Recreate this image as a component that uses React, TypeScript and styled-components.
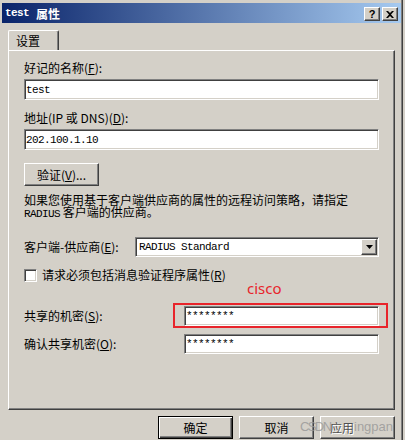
import React from "react";
import styled, { createGlobalStyle, css } from "styled-components";

const Global = createGlobalStyle`
  html, body { margin: 0; padding: 0; background: #d4d0c8; }
  body {
    font-family: "Noto Sans CJK SC", "Noto Sans", sans-serif;
    font-size: 12px;
    color: #000;
    overflow: hidden;
  }
  #root { width: 405px; height: 440px; }
`;

const raised = css`
  background: #d4d0c8;
  border: 1px solid;
  border-color: #fff #404040 #404040 #fff;
  box-shadow: inset -1px -1px #808080;
`;

const sunken = css`
  background: #fff;
  border: 1px solid;
  border-color: #808080 #fff #fff #808080;
  box-shadow: inset 1px 1px #404040, inset -1px -1px #d4d0c8;
`;

const Window = styled.div`
  box-sizing: border-box;
  width: 403px;
  height: 440px;
  padding: 3px 1px 0 2px;
  background: #d4d0c8;
  border-right: 1px solid #404040;
  box-shadow: inset -1px 0 #808080;
  display: flex;
  flex-direction: column;
`;

const TitleBar = styled.div`
  height: 20px;
  display: flex;
  align-items: center;
  justify-content: space-between;
  padding: 0 3px 0 3px;
  background: linear-gradient(to right, #0a246a, #a6caf0);
`;

const Title = styled.div`
  display: flex;
  align-items: center;
  gap: 7px;
  color: #fff;
  font-weight: bold;
  font-size: 12px;
`;

const Mono = styled.span`
  font-family: "Liberation Mono", "DejaVu Sans Mono", monospace;
  font-size: 11px;
  letter-spacing: -0.6px;
`;

const CaptionButtons = styled.div`
  display: flex;
  gap: 2px;
  align-self: flex-end;
  margin-bottom: 2px;
`;

const CaptionButton = styled.div`
  ${raised};
  box-sizing: border-box;
  width: 16px;
  height: 14px;
  display: flex;
  align-items: center;
  justify-content: center;
  font-family: "Liberation Sans", Arial, sans-serif;
  font-weight: bold;
  font-size: 11px;
  line-height: 1;
  color: #000;
`;

const Body = styled.div`
  padding: 7px 6px 0 6px;
  display: flex;
  flex-direction: column;
`;

const TabStrip = styled.div`
  display: flex;
  height: 20px;
`;

const Tab = styled.div`
  position: relative;
  z-index: 1;
  box-sizing: border-box;
  width: 51px;
  height: 20px;
  margin-bottom: -1px;
  padding-left: 7px;
  display: flex;
  align-items: center;
  background: #d4d0c8;
  border-left: 1px solid #fff;
  border-top: 1px solid #fff;
  border-right: 1px solid #404040;
  border-top-left-radius: 2px;
  border-top-right-radius: 2px;
  box-shadow: inset -1px 0 #808080;
`;

const Panel = styled.div`
  box-sizing: border-box;
  height: 360px;
  padding: 0 15px;
  border: 1px solid;
  border-color: #fff #404040 #404040 #fff;
  box-shadow: inset -1px -1px #808080;
  display: flex;
  flex-direction: column;
`;

const Field = styled.div<{ $mt: number }>`
  display: flex;
  flex-direction: column;
  gap: 4px;
  margin-top: ${(p) => p.$mt}px;
`;

const Label = styled.div`
  height: 14px;
  line-height: 14px;
  white-space: nowrap;
`;

const TextBox = styled.div<{ $h?: number; $w?: number }>`
  ${sunken};
  box-sizing: border-box;
  height: ${(p) => p.$h ?? 21}px;
  width: ${(p) => (p.$w ? `${p.$w}px` : "auto")};
  padding-left: 1px;
  display: flex;
  align-items: center;
  font-family: "Liberation Mono", "DejaVu Sans Mono", monospace;
  font-size: 11px;
  letter-spacing: -0.6px;
  white-space: nowrap;
`;

const PushButton = styled.div<{ $default?: boolean; $disabled?: boolean }>`
  box-sizing: border-box;
  width: 75px;
  height: 23px;
  display: flex;
  align-items: center;
  justify-content: center;
  white-space: nowrap;
  background: #d4d0c8;
  ${(p) =>
    p.$default
      ? css`
          border: 1px solid #000;
          box-shadow: inset 1px 1px #fff, inset -1px -1px #404040,
            inset -2px -2px #808080;
        `
      : raised};
  ${(p) =>
    p.$disabled &&
    css`
      justify-content: flex-start;
      padding-left: 9px;
      color: #505050;
      text-shadow: 1px 1px #fff;
    `};
`;

const VerifyRow = styled.div`
  margin-top: 13px;
  display: flex;
`;

const Paragraph = styled.div`
  margin-top: 8px;
  line-height: 12px;
  white-space: nowrap;
`;

const Row = styled.div<{ $mt: number }>`
  margin-top: ${(p) => p.$mt}px;
  display: flex;
  align-items: center;
  justify-content: space-between;
`;

const Combo = styled.div`
  ${sunken};
  box-sizing: border-box;
  width: 244px;
  height: 20px;
  display: flex;
  align-items: center;
  padding: 2px 1px 2px 3px;
  font-family: "Liberation Mono", "DejaVu Sans Mono", monospace;
  font-size: 11px;
  letter-spacing: -0.6px;
`;

const DropButton = styled.div`
  ${raised};
  box-sizing: border-box;
  margin-left: auto;
  width: 16px;
  height: 16px;
  display: flex;
  align-items: center;
  justify-content: center;
`;

const CheckRow = styled.div`
  margin-top: 11px;
  display: flex;
  align-items: center;
  gap: 5px;
`;

const CheckBox = styled.div`
  ${sunken};
  box-sizing: border-box;
  width: 13px;
  height: 13px;
`;

const InputWrap = styled.div`
  position: relative;
  width: 195px;
`;

const RedBox = styled.div`
  position: absolute;
  top: -3px;
  left: -11px;
  right: -9px;
  bottom: -2px;
  border: 2px solid #e8242b;
  pointer-events: none;
`;

const Note = styled.div`
  position: absolute;
  left: 63px;
  top: -28px;
  color: #e8242b;
  font-family: "Noto Sans", "Open Sans", sans-serif;
  font-size: 15px;
  line-height: 20px;
`;

const ButtonRow = styled.div`
  position: relative;
  margin-top: 6px;
  display: flex;
  justify-content: flex-end;
  gap: 6px;
`;

const Watermark = styled.div<{ $left: number; $tight?: boolean }>`
  position: absolute;
  left: ${(p) => p.$left}px;
  top: 2px;
  color: rgba(150, 150, 150, 0.8);
  font-family: "Liberation Sans", Arial, sans-serif;
  font-size: 13px;
  line-height: 18px;
  letter-spacing: ${(p) => (p.$tight ? "-1.6px" : "0")};
  white-space: nowrap;
  pointer-events: none;
`;

export default function App() {
  return (
    <>
      <Global />
      <Window>
        <TitleBar>
          <Title>
            <Mono>test</Mono>
            <span>属性</span>
          </Title>
          <CaptionButtons>
            <CaptionButton>?</CaptionButton>
            <CaptionButton>
              <svg width="8" height="7" viewBox="0 0 8 7">
                <path
                  d="M0 0h2l2 2 2-2h2L5 3.5 8 7H6L4 5 2 7H0l3-3.5z"
                  fill="#000"
                />
              </svg>
            </CaptionButton>
          </CaptionButtons>
        </TitleBar>
        <Body>
          <TabStrip>
            <Tab>设置</Tab>
          </TabStrip>
          <Panel>
            <Field $mt={10}>
              <Label>
                好记的名称(<u>F</u>):
              </Label>
              <TextBox>test</TextBox>
            </Field>
            <Field $mt={11}>
              <Label>
                地址(IP 或 DNS)(<u>D</u>):
              </Label>
              <TextBox>202.100.1.10</TextBox>
            </Field>
            <VerifyRow>
              <PushButton>
                验证(<u>V</u>)...
              </PushButton>
            </VerifyRow>
            <Paragraph>
              如果您使用基于客户端供应商的属性的远程访问策略，请指定
              <br />
              <Mono>RADIUS</Mono> 客户端的供应商。
            </Paragraph>
            <Row $mt={17}>
              <Label>
                客户端-供应商(<u>E</u>):
              </Label>
              <Combo>
                RADIUS Standard
                <DropButton>
                  <svg width="7" height="4" viewBox="0 0 7 4">
                    <path d="M0 0h7L3.5 4z" fill="#000" />
                  </svg>
                </DropButton>
              </Combo>
            </Row>
            <CheckRow>
              <CheckBox />
              <Label>
                请求必须包括消息验证程序属性(<u>R</u>)
              </Label>
            </CheckRow>
            <Row $mt={24}>
              <Label>
                共享的机密(<u>S</u>):
              </Label>
              <InputWrap>
                <TextBox $h={20}>********</TextBox>
                <RedBox />
                <Note>cisco</Note>
              </InputWrap>
            </Row>
            <Row $mt={8}>
              <Label>
                确认共享机密(<u>O</u>):
              </Label>
              <TextBox $h={20} $w={195}>
                ********
              </TextBox>
            </Row>
          </Panel>
          <ButtonRow>
            <PushButton $default>确定</PushButton>
            <PushButton>取消</PushButton>
            <PushButton $disabled>应用</PushButton>
            <Watermark $left={292} $tight>
              CSDN
            </Watermark>
            <Watermark $left={346}>ingpan</Watermark>
          </ButtonRow>
        </Body>
      </Window>
    </>
  );
}
